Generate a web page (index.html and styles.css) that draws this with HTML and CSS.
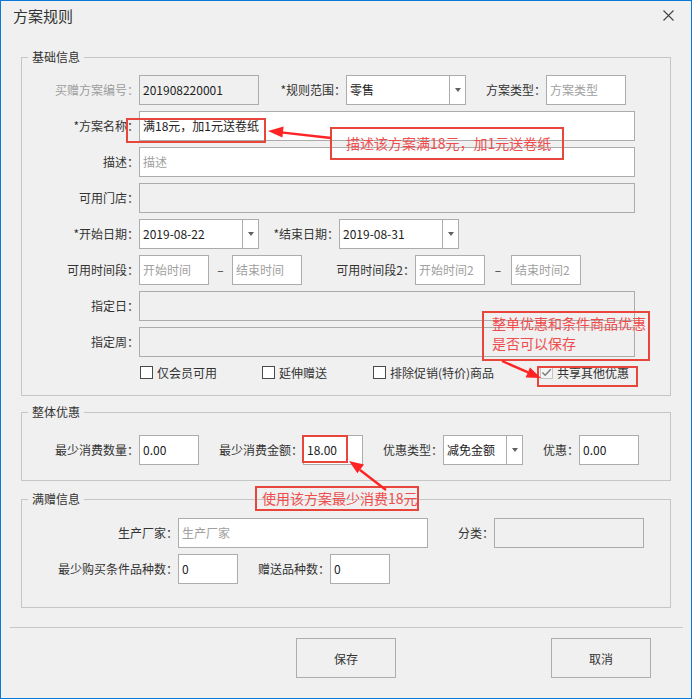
FILE: index.html
```html
<!DOCTYPE html>
<html lang="zh-CN">
<head>
<meta charset="utf-8">
<title>方案规则</title>
<link rel="stylesheet" href="styles.css">
</head>
<body>
<div class="window">
  <div class="titlebar">
    <span class="title">方案规则</span>
    <svg class="close" width="11" height="11" viewBox="0 0 11 11"><path d="M0.5 0.5 L10.5 10.5 M10.5 0.5 L0.5 10.5" stroke="#444" stroke-width="1.1" fill="none"/></svg>
  </div>

  <fieldset class="group g1">
    <legend>基础信息</legend>
    <div class="rows">
      <div class="row">
        <label class="lbl w117 dis">买赠方案编号：</label>
        <div class="input ro w120">201908220001</div>
        <label class="lbl w87">*规则范围：</label>
        <div class="select w120"><span class="val">零售</span><span class="arrow"><i></i></span></div>
        <label class="lbl w80">方案类型：</label>
        <div class="input ph w80">方案类型</div>
      </div>
      <div class="row">
        <label class="lbl w117">*方案名称：</label>
        <div class="input w496">满18元，加1元送卷纸</div>
      </div>
      <div class="row">
        <label class="lbl w117">描述：</label>
        <div class="input ph w496">描述</div>
      </div>
      <div class="row">
        <label class="lbl w117">可用门店：</label>
        <div class="input ro w496"></div>
      </div>
      <div class="row">
        <label class="lbl w117">*开始日期：</label>
        <div class="select w120"><span class="val">2019-08-22</span><span class="arrow"><i></i></span></div>
        <label class="lbl w80">*结束日期：</label>
        <div class="select w120"><span class="val">2019-08-31</span><span class="arrow"><i></i></span></div>
      </div>
      <div class="row">
        <label class="lbl w117">可用时间段：</label>
        <div class="input ph w70">开始时间</div>
        <span class="dash w23">–</span>
        <div class="input ph w70">结束时间</div>
        <label class="lbl w113">可用时间段2：</label>
        <div class="input ph w70">开始时间2</div>
        <span class="dash w26">–</span>
        <div class="input ph w70">结束时间2</div>
      </div>
      <div class="row">
        <label class="lbl w117">指定日：</label>
        <div class="input ro w496"></div>
      </div>
      <div class="row">
        <label class="lbl w117">指定周：</label>
        <div class="input ro w496"></div>
      </div>
    </div>
    <div class="checks">
      <span class="check c1"><span class="cb"></span>仅会员可用</span>
      <span class="check c2"><span class="cb"></span>延伸赠送</span>
      <span class="check c3"><span class="cb"></span>排除促销(特价)商品</span>
      <span class="check c4"><span class="cb checked"><svg width="11" height="11" viewBox="0 0 11 11"><path d="M1.5 5.5 L4.2 8.2 L9.8 2.2" stroke="#7a7a7a" stroke-width="1.4" fill="none"/></svg></span>共享其他优惠</span>
    </div>
  </fieldset>

  <fieldset class="group g2">
    <legend>整体优惠</legend>
    <div class="row">
      <label class="lbl w117">最少消费数量：</label>
      <div class="input w60">0.00</div>
      <label class="lbl w104">最少消费金额：</label>
      <div class="input w60">18.00</div>
      <label class="lbl w80">优惠类型：</label>
      <div class="select w80"><span class="val">减免金额</span><span class="arrow"><i></i></span></div>
      <label class="lbl w56">优惠：</label>
      <div class="input w60">0.00</div>
    </div>
  </fieldset>

  <fieldset class="group g3">
    <legend>满赠信息</legend>
    <div class="rows">
      <div class="row">
        <label class="lbl w156">生产厂家：</label>
        <div class="input ph w250">生产厂家</div>
        <label class="lbl w66">分类：</label>
        <div class="input ro w150"></div>
      </div>
      <div class="row">
        <label class="lbl w156">最少购买条件品种数：</label>
        <div class="input w60">0</div>
        <label class="lbl w92">赠送品种数：</label>
        <div class="input w60">0</div>
      </div>
    </div>
  </fieldset>

  <div class="separator"></div>

  <div class="buttons">
    <button class="btn save">保存</button>
    <button class="btn cancel">取消</button>
  </div>
</div>

<div class="note n1"></div>
<div class="note n2">描述该方案满18元，加1元送卷纸</div>
<div class="note n3">整单优惠和条件商品优惠<br>是否可以保存</div>
<div class="note n4"></div>
<div class="note n5"></div>
<div class="note n6">使用该方案最少消费18元</div>

<svg class="arrows" width="692" height="699" viewBox="0 0 692 699">
  <g stroke="#ff2424" stroke-width="2.4" fill="none">
    <line x1="331" y1="138" x2="281" y2="132.4"/>
    <line x1="502" y1="361" x2="528" y2="372.4"/>
    <line x1="386" y1="490" x2="360" y2="470"/>
  </g>
  <g fill="#ff2424">
    <polygon points="268,131 283.6,126.6 282.4,137.6"/>
    <polygon points="541,378 525.6,377.6 530,367.6"/>
    <polygon points="349,461 364,464.6 357.4,473.2"/>
  </g>
</svg>
</body>
</html>
```

FILE: styles.css
```css
html, body {
  margin: 0;
  padding: 0;
}

body {
  position: relative;
  width: 692px;
  height: 699px;
  overflow: hidden;
  font-family: "Noto Sans CJK SC", "Noto Sans", sans-serif;
  font-size: 12px;
  color: #333;
}

.window {
  box-sizing: border-box;
  width: 692px;
  height: 699px;
  border: 1px solid #0a78d7;
  background: #f0f0f0;
}

.titlebar {
  display: flex;
  align-items: center;
  justify-content: space-between;
  height: 30px;
  padding: 0 17px 0 12px;
}

.title {
  font-size: 15px;
  color: #333;
  line-height: 30px;
}

.close {
  margin-top: -2px;
}

.group {
  box-sizing: border-box;
  width: 650px;
  margin: 0 0 0 20px;
  padding: 0;
  min-width: 0;
  border: 1px solid #c6c6c6;
}

.group legend {
  margin-left: 6px;
  padding: 0 4px;
  font-size: 12px;
  line-height: 16px;
  color: #333;
}

.g1 {
  margin-top: 18px;
  padding: 10px 0 16px 0;
}

.g2 {
  margin-top: 8px;
  padding: 15px 0 15px 0;
}

.g3 {
  margin-top: 10px;
  padding: 11px 0 23px 0;
}

.rows {
  display: flex;
  flex-direction: column;
  gap: 6px;
}

.row {
  display: flex;
  height: 30px;
}

.lbl {
  flex: none;
  text-align: right;
  line-height: 30px;
  white-space: nowrap;
  color: #333;
}

.lbl.dis {
  color: #9d9d9d;
}

.input,
.select {
  box-sizing: border-box;
  flex: none;
  height: 30px;
  border: 1px solid #acacac;
  background: #fff;
  line-height: 28px;
  color: #222;
  white-space: nowrap;
  overflow: hidden;
}

.input {
  padding-left: 3px;
}

.input.ro {
  background: #f0f0f0;
}

.input.ph {
  color: #a0a0a0;
}

.select {
  display: flex;
}

.select .val {
  flex: 1;
  padding-left: 3px;
}

.select .arrow {
  flex: none;
  width: 15px;
  border-left: 1px solid #acacac;
  display: flex;
  align-items: center;
  justify-content: center;
}

.select .arrow i {
  width: 0;
  height: 0;
  border-left: 3.5px solid transparent;
  border-right: 3.5px solid transparent;
  border-top: 4px solid #606060;
}

.dash {
  flex: none;
  text-align: center;
  line-height: 30px;
  color: #333;
}

.w23 { width: 23px; }
.w26 { width: 26px; }
.w56 { width: 56px; }
.w60 { width: 60px; }
.w66 { width: 66px; }
.w70 { width: 70px; }
.w80 { width: 80px; }
.w87 { width: 87px; }
.w92 { width: 92px; }
.w104 { width: 104px; }
.w113 { width: 113px; }
.w117 { width: 117px; }
.w120 { width: 120px; }
.w150 { width: 150px; }
.w156 { width: 156px; }
.w250 { width: 250px; }
.w496 { width: 496px; }

.checks {
  display: flex;
  align-items: center;
  height: 13px;
  margin-top: 9px;
  padding-left: 118px;
}

.check {
  display: flex;
  align-items: center;
  gap: 4px;
  flex: none;
  line-height: 13px;
  color: #333;
  white-space: nowrap;
}

.c1 { width: 122px; }
.c2 { width: 111px; }
.c3 { width: 167px; }

.cb {
  box-sizing: border-box;
  width: 13px;
  height: 13px;
  border: 1px solid #4a4a4a;
  background: #fff;
  display: flex;
  align-items: center;
  justify-content: center;
}

.cb.checked {
  border-color: #c4c4c4;
  background: #f4f4f4;
}

.separator {
  width: 673px;
  height: 1px;
  margin: 19px 0 0 9px;
  background: #c8c8c8;
}

.buttons {
  display: flex;
  margin-top: 10px;
}

.btn {
  box-sizing: border-box;
  width: 100px;
  height: 40px;
  border: 1px solid #adadad;
  background: #f0f0f0;
  font-family: "Noto Sans CJK SC", "Noto Sans", sans-serif;
  font-size: 12px;
  color: #333;
  padding: 0;
}

.save {
  margin-left: 295px;
}

.cancel {
  margin-left: 155px;
}

/* annotations overlaid on the screenshot */
.note {
  position: absolute;
  box-sizing: border-box;
  border: 2px solid #e8463c;
  font-size: 14px;
  color: #ef4d4d;
  white-space: nowrap;
}

.n1 { left: 126px; top: 118px; width: 140px; height: 25px; }
.n2 { left: 330px; top: 127px; width: 234px; height: 33px; padding-left: 14px; line-height: 29px; }
.n3 { left: 482px; top: 311px; width: 168px; height: 50px; padding-left: 8px; line-height: 20px; }
.n4 { left: 537px; top: 366px; width: 101px; height: 21px; }
.n5 { left: 302px; top: 435px; width: 46px; height: 28px; }
.n6 { left: 255px; top: 486px; width: 164px; height: 25px; padding-left: 5px; line-height: 21px; }

.arrows {
  position: absolute;
  left: 0;
  top: 0;
  pointer-events: none;
}
```
